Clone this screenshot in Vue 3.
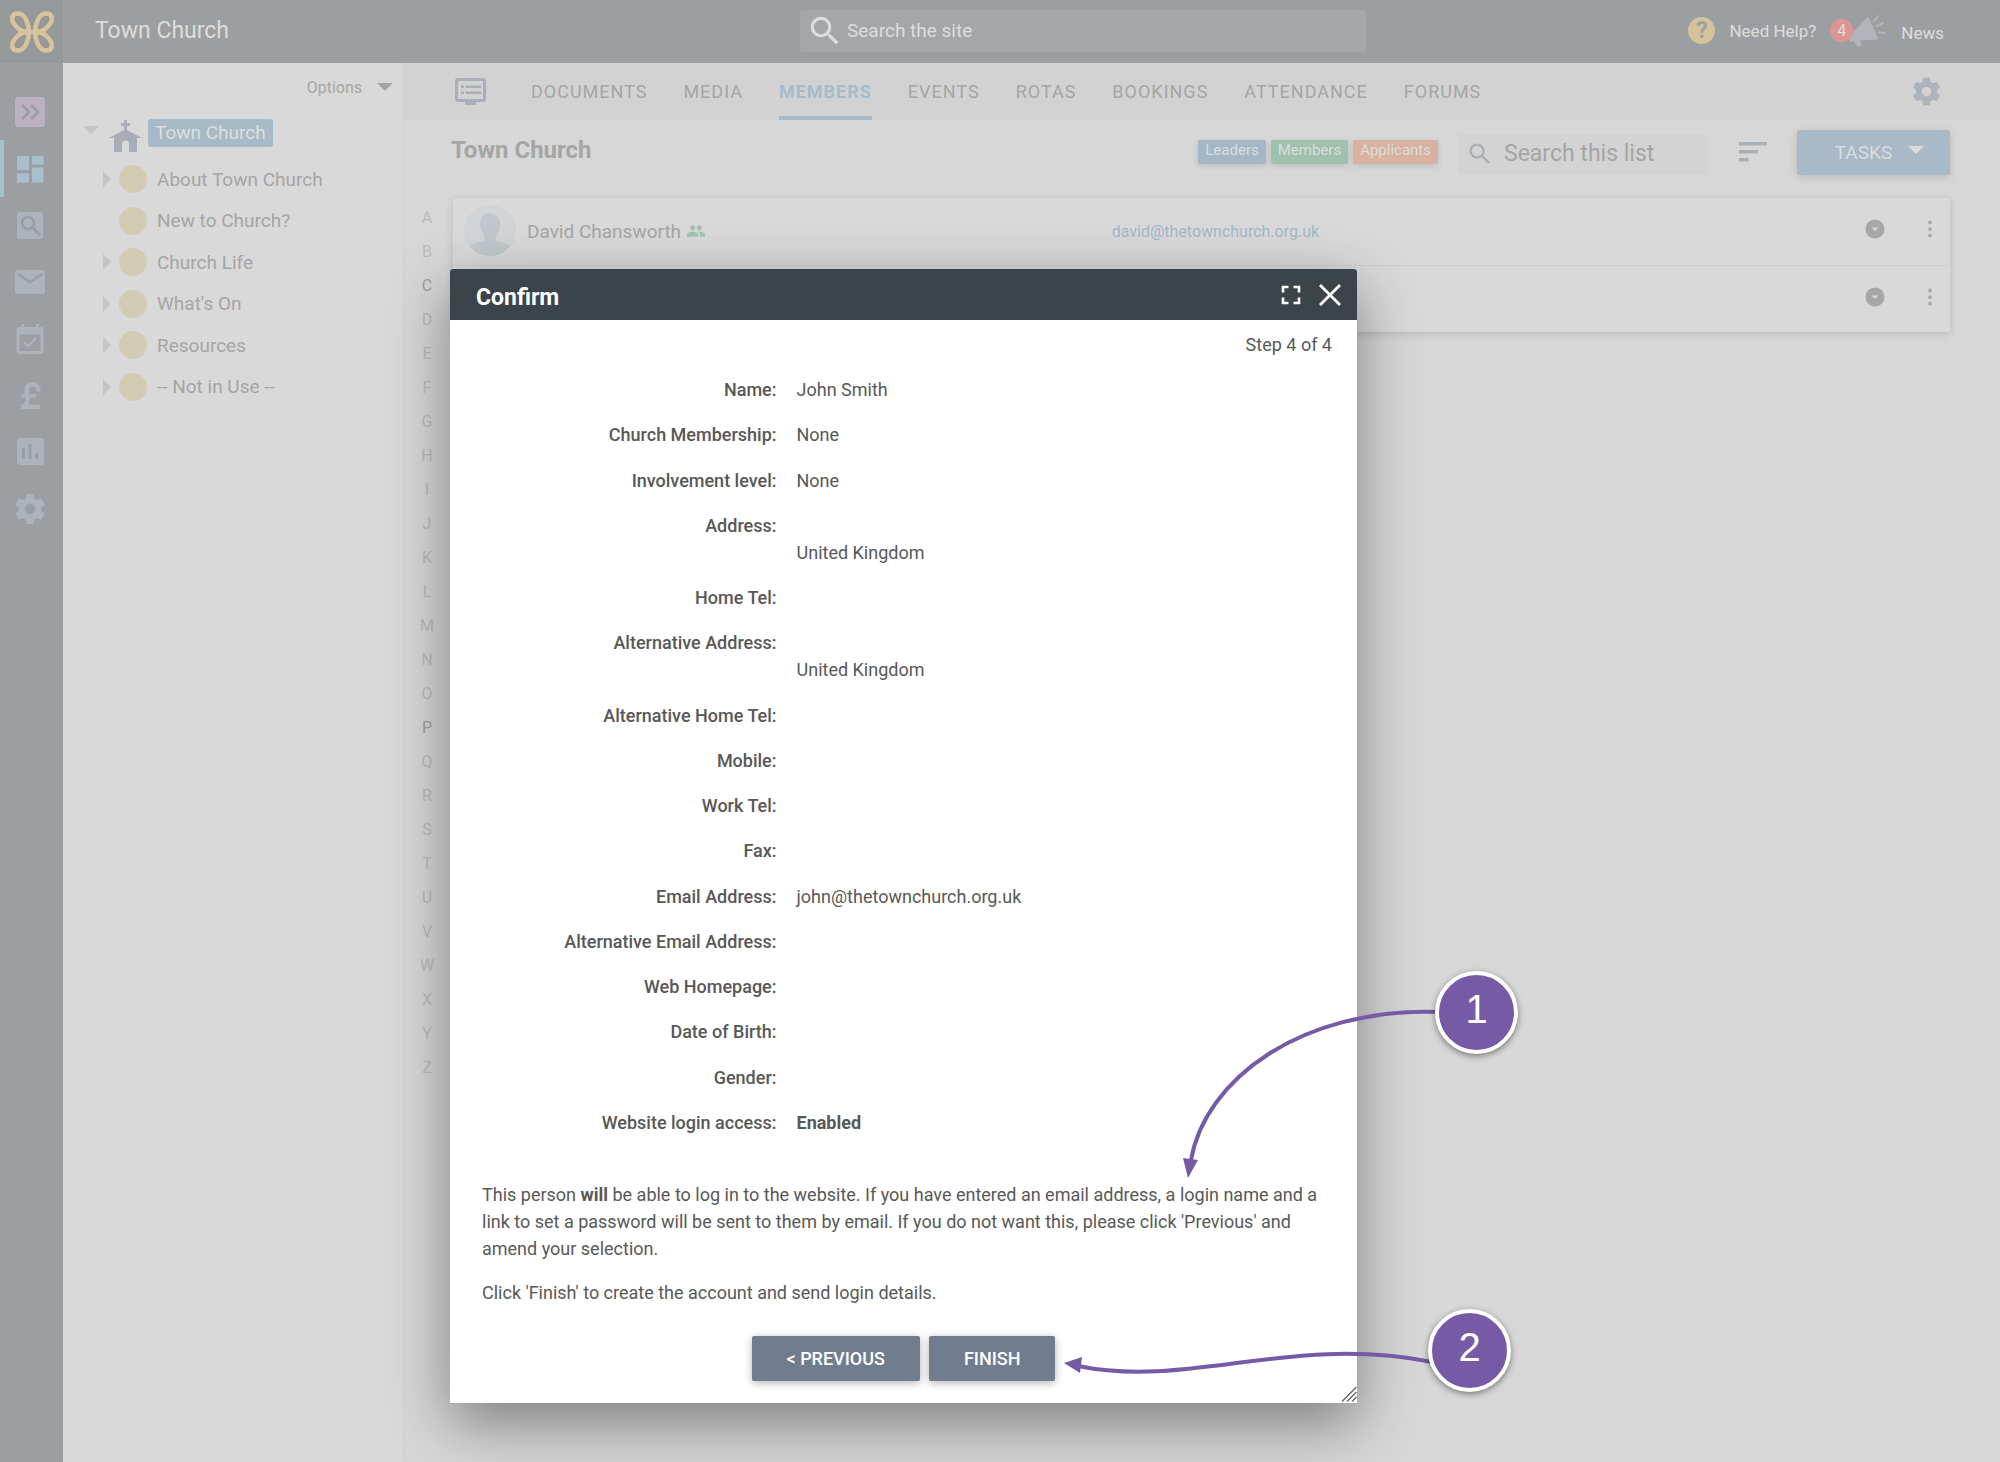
<script setup>
const railItems = [
  { name: 'expand', label: 'Expand menu' },
  { name: 'dashboard', label: 'Dashboard', active: true },
  { name: 'search', label: 'Search' },
  { name: 'mail', label: 'Mail' },
  { name: 'calendar', label: 'Calendar' },
  { name: 'pound', label: 'Finance' },
  { name: 'chart', label: 'Reports' },
  { name: 'gear', label: 'Settings' },
]

const pages = [
  { name: 'About Town Church', children: true },
  { name: 'New to Church?', children: false },
  { name: 'Church Life', children: true },
  { name: "What's On", children: true },
  { name: 'Resources', children: true },
  { name: '-- Not in Use --', children: true },
]

const tabs = ['Documents', 'Media', 'Members', 'Events', 'Rotas', 'Bookings', 'Attendance', 'Forums']
const activeTab = 'Members'

const letters = 'ABCDEFGHIJKLMNOPQRSTUVWXYZ'.split('')
const usedLetters = ['C', 'P']

const people = [
  { name: 'David Chansworth', email: 'david@thetownchurch.org.uk' },
  { name: '', email: '' },
]

const details = [
  { label: 'Name', value: 'John Smith' },
  { label: 'Church Membership', value: 'None' },
  { label: 'Involvement level', value: 'None' },
  { label: 'Address', value: 'United Kingdom', below: true },
  { label: 'Home Tel', value: '' },
  { label: 'Alternative Address', value: 'United Kingdom', below: true },
  { label: 'Alternative Home Tel', value: '' },
  { label: 'Mobile', value: '' },
  { label: 'Work Tel', value: '' },
  { label: 'Fax', value: '' },
  { label: 'Email Address', value: 'john@thetownchurch.org.uk' },
  { label: 'Alternative Email Address', value: '' },
  { label: 'Web Homepage', value: '' },
  { label: 'Date of Birth', value: '' },
  { label: 'Gender', value: '' },
  { label: 'Website login access', value: 'Enabled', strong: true },
]

const gearPath =
  'M19.43 12.98c.04-.32.07-.64.07-.98s-.03-.66-.07-.98l2.11-1.65c.19-.15.24-.42.12-.64l-2-3.46c-.12-.22-.39-.3-.61-.22l-2.49 1c-.52-.4-1.08-.73-1.69-.98l-.38-2.65C14.46 2.18 14.25 2 14 2h-4c-.25 0-.46.18-.49.42l-.38 2.65c-.61.25-1.17.59-1.69.98l-2.49-1c-.23-.09-.49 0-.61.22l-2 3.46c-.13.22-.07.49.12.64l2.11 1.65c-.04.32-.07.65-.07.98s.03.66.07.98l-2.11 1.65c-.19.15-.24.42-.12.64l2 3.46c.12.22.39.3.61.22l2.49-1c.52.4 1.08.73 1.69.98l.38 2.65c.03.24.24.42.49.42h4c.25 0 .46-.18.49-.42l.38-2.65c.61-.25 1.17-.59 1.69-.98l2.49 1c.23.09.49 0 .61-.22l2-3.46c.12-.22.07-.49-.12-.64l-2.11-1.65zM12 15.5c-1.93 0-3.5-1.57-3.5-3.5s1.57-3.5 3.5-3.5 3.5 1.57 3.5 3.5-1.57 3.5-3.5 3.5z'
const searchPath =
  'M15.5 14h-.79l-.28-.27C15.41 12.59 16 11.11 16 9.5 16 5.91 13.09 3 9.5 3S3 5.91 3 9.5 5.91 16 9.5 16c1.61 0 3.09-.59 4.23-1.57l.27.28v.79l5 4.99L20.49 19l-4.99-5zm-6 0C7.01 14 5 11.99 5 9.5S7.01 5 9.5 5 14 7.01 14 9.5 11.99 14 9.5 14z'
</script>

<template>
  <div class="page">
    <header class="topbar">
      <a class="logo" href="#" aria-label="Home">
        <svg width="44" height="42" viewBox="0 0 44 42" fill="none" stroke="#d8c49c" stroke-width="4.6" stroke-linejoin="round">
          <path d="M19 21C18 10 14 2.500 7.500 2.500 2 2.500 1 8 3.500 12 6.500 17.500 12 21 19 21Z" />
          <path d="M19 21C18 32 14 39.500 7.500 39.500 2 39.500 1 34 3.500 30 6.500 24.500 12 21 19 21Z" />
          <path d="M25 21C26 10 30 2.500 36.500 2.500 42 2.500 43 8 40.500 12 37.500 17.500 32 21 25 21Z" />
          <path d="M25 21C26 32 30 39.500 36.500 39.500 42 39.500 43 34 40.500 30 37.500 24.500 32 21 25 21Z" />
          <path d="M18 21h8" />
        </svg>
      </a>
      <span class="site-name">Town Church</span>
      <label class="site-search">
        <svg width="38" height="38" viewBox="0 0 24 24" fill="#dcdddd"><path :d="searchPath" /></svg>
        <input type="text" placeholder="Search the site" aria-label="Search the site" />
      </label>
      <nav class="top-links">
        <a href="#" class="help-link"><span class="help-mark">?</span>Need Help?</a>
        <a href="#" class="news-link">
          <span class="count">4</span>
          <svg class="megaphone" width="38" height="32" viewBox="0 0 38 32">
            <path d="M19 2 29 24 11 25 12 31 8 31 6 26 1 26 0 22Z" fill="#b1b5b9" stroke="#b1b5b9" stroke-width="1" stroke-linejoin="round" />
            <path d="M25 6 29 1M28 11 34 8M30 17.500 36 18" stroke="#b1b5b9" stroke-width="2" stroke-linecap="round" />
          </svg>
          <span class="news-text">News</span>
        </a>
      </nav>
    </header>

    <div class="body">
      <nav class="rail" aria-label="Main">
        <a v-for="item in railItems" :key="item.name" href="#" :class="{ active: item.active }" :aria-label="item.label">
          <svg width="30" height="30" viewBox="0 0 30 30" fill="#adb3ba">
            <template v-if="item.name === 'expand'">
              <rect width="30" height="30" rx="3" fill="#bcb1c3" />
              <path d="M7 8l7 7-7 7M16 8l7 7-7 7" fill="none" stroke="#9b9da1" stroke-width="2.600" />
            </template>
            <path v-else-if="item.name === 'dashboard'" fill="#a9bfcc" d="M2 2h12v14H2zM17 2h11.500v8.500H17zM2 19.500h12v9H2zM17 13.500h11.500v15H17z" />
            <template v-else-if="item.name === 'search'">
              <rect x="2" y="1" width="26" height="27" rx="3" />
              <path d="M18 17l7 7" stroke="#9b9fa2" stroke-width="3" />
              <circle cx="13" cy="12" r="6" fill="none" stroke="#9b9fa2" stroke-width="2.600" />
            </template>
            <template v-else-if="item.name === 'mail'">
              <rect y="3" width="30" height="24" rx="3" />
              <path d="M3 7l12 8 12-8" fill="none" stroke="#9b9fa2" stroke-width="2.600" />
            </template>
            <template v-else-if="item.name === 'calendar'">
              <path fill-rule="evenodd" d="M6 0h3v3h12V0h3v3h1.500a3 3 0 0 1 3 3v21a3 3 0 0 1-3 3h-21a3 3 0 0 1-3-3V6a3 3 0 0 1 3-3H6zM4.500 10.500V27h21V10.500z" />
              <path d="M9 18l4 4 8-8" fill="none" stroke="#adb3ba" stroke-width="2.400" />
            </template>
            <template v-else-if="item.name === 'pound'">
              <path d="M23.500 10.500C23.500 5 21 3.500 18 3.500c-5 0-7 3.500-6 8 1.400 6 1 10-2 13.300" fill="none" stroke="#adb3ba" stroke-width="4.500" />
              <path d="M6 13h15v3.500H6zM6 23.500h19V28H6z" />
            </template>
            <template v-else-if="item.name === 'chart'">
              <rect x="2" y="1" width="27" height="27" rx="3" />
              <path d="M7 11h3v11H7zM13.500 7h3v15h-3zM20 16h3v6h-3z" fill="#9b9fa2" />
            </template>
            <svg v-else x="-3" y="-3" width="36" height="36" viewBox="0 0 24 24"><path :d="gearPath" /></svg>
          </svg>
        </a>
      </nav>

      <aside class="tree">
        <button type="button" class="options">Options <span class="caret"></span></button>
        <div class="root">
          <span class="caret light"></span>
          <svg width="33" height="32" viewBox="0 0 33 32" fill="#a8adb8">
            <path d="M15 0h3v3h3v3h-3v4l15 8h-5v14h-8v-8a3.500 3.500 0 0 0-7 0v8H5V18H0l15-8V6h-3V3h3z" />
          </svg>
          <a href="#">Town Church</a>
        </div>
        <ul>
          <li v-for="page in pages" :key="page.name">
            <span class="arrow" :class="{ hidden: !page.children }"></span>
            <span class="dot"></span>
            <a href="#">{{ page.name }}</a>
          </li>
        </ul>
      </aside>

      <main>
        <nav class="tabs" aria-label="Sections">
          <svg class="board" width="31" height="27" viewBox="0 0 31 27" fill="#a9aeb8">
            <path fill-rule="evenodd" d="M3 0h25a3 3 0 0 1 3 3v18a3 3 0 0 1-3 3h-7v3H10v-3H3a3 3 0 0 1-3-3V3a3 3 0 0 1 3-3zM3 3v18h25V3zM6 7.500h3v2.500H6zM10.500 7.500H26v2.500H10.500zM6 13.500h3V16H6zM10.500 13.500H26V16H10.500z" />
          </svg>
          <a v-for="tab in tabs" :key="tab" href="#" :class="{ current: tab === activeTab }">{{ tab }}</a>
          <button type="button" class="plain settings" aria-label="Settings">
            <svg width="33" height="33" viewBox="0 0 24 24" fill="#adb3bb"><path :d="gearPath" /></svg>
          </button>
        </nav>

        <div class="toolbar">
          <h1>Town Church</h1>
          <a href="#" class="tag leaders">Leaders</a>
          <a href="#" class="tag members">Members</a>
          <a href="#" class="tag applicants">Applicants</a>
          <label class="list-search">
            <svg width="28" height="28" viewBox="0 0 24 24" fill="#a9afb8"><path :d="searchPath" /></svg>
            <input type="text" placeholder="Search this list" aria-label="Search this list" />
          </label>
          <button type="button" class="plain sort" aria-label="Sort">
            <svg width="28" height="20" viewBox="0 0 28 20" fill="#a9afb8"><path d="M0 0h28v3.500H0zM0 8h19v3.500H0zM0 16h9.500v3.500H0z" /></svg>
          </button>
          <button type="button" class="tasks">TASKS <span class="caret white"></span></button>
        </div>

        <div class="listing">
          <nav class="letters" aria-label="Letters">
            <a v-for="letter in letters" :key="letter" href="#" :class="{ used: usedLetters.includes(letter) }">{{ letter }}</a>
          </nav>
          <table class="people">
            <tbody>
              <tr v-for="(person, index) in people" :key="index">
                <td class="who">
                  <div v-if="person.name" class="person">
                    <svg width="52" height="52" viewBox="0 0 52 52">
                      <clipPath id="avatar"><circle cx="26" cy="26" r="25" /></clipPath>
                      <circle cx="26" cy="26" r="25" fill="#d2d5d7" stroke="#cdd1d4" />
                      <path clip-path="url(#avatar)" fill="#c1c7cb" d="M26 8c7 0 10 5 10 11 0 5-2 8-4 11-1 5 0 6 4 7 6 1 10 3 13 6v9H3v-9c3-3 7-5 13-6 4-1 5-2 4-7-2-3-4-6-4-11 0-6 3-11 10-11z" />
                    </svg>
                    <span>{{ person.name }}</span>
                    <svg width="18" height="12" viewBox="1 5 22 14" fill="#a0c2ae">
                      <path d="M16 11c1.660 0 2.990-1.340 2.990-3S17.660 5 16 5s-3 1.340-3 3 1.340 3 3 3zm-8 0c1.660 0 2.990-1.340 2.990-3S9.660 5 8 5 5 6.340 5 8s1.340 3 3 3zm0 2c-2.330 0-7 1.170-7 3.500V19h14v-2.500c0-2.330-4.670-3.500-7-3.500zm8 0c-.290 0-.620.020-.970.050 1.160.840 1.970 1.970 1.970 3.450V19h6v-2.500c0-2.330-4.670-3.500-7-3.500z" />
                    </svg>
                  </div>
                </td>
                <td><a v-if="person.email" href="#">{{ person.email }}</a></td>
                <td class="actions">
                  <div>
                    <button type="button" class="plain" aria-label="Show details">
                      <svg width="20" height="20" viewBox="0 0 20 20"><circle cx="10" cy="10" r="9.500" fill="#a7a7a7" /><path d="M6.500 8.500h7L10 12z" fill="#d8d8d8" /></svg>
                    </button>
                    <button type="button" class="plain" aria-label="More actions">
                      <svg width="6" height="18" viewBox="0 0 6 18" fill="#acacac"><circle cx="3" cy="2.500" r="2" /><circle cx="3" cy="9" r="2" /><circle cx="3" cy="15.500" r="2" /></svg>
                    </button>
                  </div>
                </td>
              </tr>
            </tbody>
          </table>
        </div>
      </main>
    </div>

    <div class="layer">
      <section class="dialog" role="dialog" aria-labelledby="dialog-title">
        <header>
          <h2 id="dialog-title">Confirm</h2>
          <button type="button" class="plain" aria-label="Full screen">
            <svg width="20" height="20" viewBox="0 0 20 20" fill="none" stroke="#fff" stroke-width="2.600"><path d="M7.500 2H2v5.500M12.500 2H18v5.500M7.500 18H2v-5.500M12.500 18H18v-5.500" /></svg>
          </button>
          <button type="button" class="plain" aria-label="Close">
            <svg width="22" height="22" viewBox="0 0 22 22" fill="none" stroke="#fff" stroke-width="2.800"><path d="M1 1l20 20M21 1L1 21" /></svg>
          </button>
        </header>
        <p class="step">Step 4 of 4</p>
        <dl>
          <div v-for="row in details" :key="row.label">
            <dt>{{ row.label }}:</dt>
            <dd :class="{ strong: row.strong, below: row.below }">{{ row.value }}</dd>
          </div>
        </dl>
        <div class="notes">
          <p>
            This person <b>will</b> be able to log in to the website. If you have entered an email address, a login name and a
            link to set a password will be sent to them by email. If you do not want this, please click 'Previous' and
            amend your selection.
          </p>
          <p>Click 'Finish' to create the account and send login details.</p>
        </div>
        <div class="buttons">
          <button type="button">&lt; PREVIOUS</button>
          <button type="button">FINISH</button>
        </div>
        <svg class="grip" width="16" height="16" viewBox="0 0 16 16" stroke="#666" stroke-width="1.400"><path d="M1 15.500 15.500 1M6 15.500 15.500 6M11 15.500 15.500 11" /></svg>

        <svg class="arrows" width="1080" height="1136" viewBox="0 0 1080 1136" fill="none" stroke="#765aa6" stroke-width="4">
          <path d="M987 743C850 739 755 811 741 891" />
          <path d="M733 889l15 2-10 18z" fill="#765aa6" stroke="none" />
          <path d="M982 1093C840 1065 740 1120 628 1097" />
          <path d="M614 1094l18-6-2 16z" fill="#765aa6" stroke="none" />
        </svg>
        <span class="callout one">1</span>
        <span class="callout two">2</span>
      </section>
    </div>
  </div>
</template>

<style>
body {
  margin: 0;
}
</style>

<style scoped>
.page {
  position: relative;
  display: flex;
  flex-direction: column;
  min-height: 100vh;
  overflow: hidden;
  background: #d7d7d7;
  color: #a5a5a5;
  font-family: Roboto, sans-serif;
  font-size: 18px;
}
.page *,
.page {
  box-sizing: border-box;
}
a {
  color: inherit;
  text-decoration: none;
}
button,
input {
  font: inherit;
  color: inherit;
}
button {
  border: 0;
  cursor: pointer;
}
svg {
  display: block;
  flex: none;
}
.plain {
  display: flex;
  padding: 0;
  background: none;
}
.caret {
  width: 0;
  border: 8px solid transparent;
  border-top-color: #a5a5a5;
  border-bottom: 0;
}
.caret.light {
  border-top-color: #c5c5c5;
}
.caret.white {
  margin-bottom: 4px;
  border-top-color: #dcdcdc;
}

/* Top bar */
.topbar {
  display: flex;
  align-items: center;
  height: 63px;
  padding-bottom: 2px;
  background: #9c9fa1;
  color: #dcdddd;
}
.logo {
  display: flex;
  align-items: center;
  justify-content: center;
  width: 63px;
  height: 63px;
  margin-bottom: -2px;
  background: #969999;
}
.site-name {
  width: 737px;
  padding-left: 32px;
  font-size: 23px;
}
.site-search {
  display: flex;
  align-items: center;
  width: 566px;
  height: 42px;
  padding-left: 6px;
  border-radius: 4px;
  background: #a4a7a9;
}
.site-search input {
  flex: 1;
  min-width: 0;
  padding: 0 3px;
  border: 0;
  background: none;
  font-size: 19px;
}
input::placeholder {
  color: inherit;
  opacity: 1;
}
.top-links {
  display: flex;
  flex: 1;
  align-items: center;
  justify-content: flex-end;
  gap: 14px;
  padding-right: 56px;
  font-size: 17px;
}
.help-link,
.news-link {
  display: flex;
  align-items: center;
}
.help-link {
  gap: 14px;
}
.help-mark {
  width: 27px;
  border-radius: 50%;
  background: #d5c29b;
  color: #9c9fa1;
  font-size: 23px;
  font-weight: 700;
  line-height: 27px;
  text-align: center;
}
.count {
  position: relative;
  z-index: 1;
  width: 23px;
  margin-right: -4px;
  border-radius: 50%;
  background: #dc9592;
  font-size: 16px;
  line-height: 23px;
  text-align: center;
}
.news-text {
  padding: 4px 0 0 14px;
}

.body {
  display: flex;
  flex: 1;
}

/* Icon rail */
.rail {
  display: flex;
  flex-direction: column;
  flex: none;
  width: 63px;
  padding-top: 21px;
  background: #9b9fa2;
}
.rail a {
  display: flex;
  align-items: center;
  height: 57px;
  padding-left: 15px;
}
.rail a:nth-child(3n + 1) {
  height: 56px;
}
.rail a.active {
  padding-left: 11px;
  border-left: 4px solid #a9bfcc;
}

/* Page tree */
.tree {
  display: flex;
  flex-direction: column;
  flex: none;
  width: 341px;
  padding: 12px 10px 0 16px;
  border-right: 1px solid #cfcfcf;
  background: #d9d9d9;
  font-size: 19px;
}
.options {
  display: flex;
  align-items: center;
  align-self: flex-end;
  gap: 15px;
  height: 24px;
  padding: 0;
  background: none;
  font-size: 16px;
}
.root {
  display: flex;
  align-items: center;
  height: 40px;
  margin-top: 14px;
}
.root .caret {
  margin: 0 10px 6px 4px;
}
.root svg {
  margin-top: 6px;
}
.root a {
  margin-left: 6px;
  padding: 0 7px;
  border-radius: 3px;
  background: #a7bac7;
  color: #dedede;
  line-height: 28px;
}
.tree ul {
  margin: 5px 0 0;
  padding: 0 0 0 24px;
  list-style: none;
}
.tree li {
  display: flex;
  align-items: center;
  height: 42px;
}
.tree li:nth-child(even) {
  height: 41px;
}
.arrow {
  margin-right: 8px;
  border: 8px solid transparent;
  border-left-color: #c5c5c5;
  border-right: 0;
}
.arrow.hidden {
  visibility: hidden;
}
.dot {
  width: 28px;
  height: 28px;
  margin-right: 10px;
  border-radius: 50%;
  background: #d3ccb5;
}

/* Main area */
main {
  flex: 1;
  min-width: 0;
}
.tabs {
  display: flex;
  gap: 36px;
  height: 57px;
  padding: 0 57px 0 51px;
  background: #d2d2d2;
  text-transform: uppercase;
  letter-spacing: 1px;
}
.tabs a {
  line-height: 58px;
}
.tabs a.current {
  height: 57px;
  border-bottom: 4px solid #a7bac7;
  color: #a4bccb;
  font-weight: 700;
}
.board {
  align-self: center;
  margin-right: 9px;
}
.settings {
  align-self: center;
  margin-left: auto;
}
.toolbar {
  display: flex;
  align-items: center;
  height: 78px;
  padding: 0 50px 14px 47px;
}
h1 {
  margin: 0 auto 4px 0;
  font-size: 24px;
  line-height: 28px;
}
.tag {
  margin-right: 5px;
  padding: 0 7px 3px;
  border-radius: 2px;
  box-shadow: 0 2px 6px rgb(0 0 0 / 12%);
  color: #dcdcdc;
  font-size: 15px;
  line-height: 21px;
}
.leaders {
  background: #a3b7c6;
}
.members {
  background: #9fc1ad;
}
.applicants {
  background: #d8b2a0;
}
.list-search {
  display: flex;
  align-items: center;
  width: 250px;
  height: 40px;
  margin: 3px 31px 0 15px;
  padding-left: 8px;
  background: #d3d3d3;
  font-size: 23px;
}
.list-search input {
  flex: 1;
  min-width: 0;
  padding: 0 10px;
  border: 0;
  background: none;
}
.tasks {
  display: flex;
  align-items: center;
  justify-content: center;
  gap: 16px;
  width: 153px;
  height: 45px;
  margin-left: 30px;
  padding: 0 0 0 12px;
  border-radius: 3px;
  background: #a8bac7;
  box-shadow: 0 2px 8px rgb(0 0 0 / 15%);
  color: #dcdcdc;
  font-size: 19px;
}
.listing {
  display: flex;
  align-items: flex-start;
  padding-right: 50px;
}
.letters {
  display: flex;
  flex-direction: column;
  width: 47px;
  padding: 3px 1px 0 0;
  color: #bbb;
  font-size: 16px;
  line-height: 34px;
  text-align: center;
}
.used {
  color: #a0a0a0;
}
.people {
  flex: 1;
  margin-left: 2px;
  border-collapse: collapse;
  background: #d9d9d9;
  box-shadow: 0 2px 8px rgb(0 0 0 / 14%);
}
.people td {
  height: 67px;
  padding: 0;
  font-size: 16px;
}
.people tr + tr td {
  border-top: 1px solid #cfcfcf;
}
.people td a {
  color: #a4b8c6;
}
.people .who {
  width: 44%;
  font-size: 19px;
}
.person {
  display: flex;
  align-items: center;
  padding-left: 11px;
}
.person span {
  margin: 0 6px 0 11px;
}
.actions div {
  display: flex;
  align-items: center;
  justify-content: flex-end;
  gap: 42px;
  padding: 0 17px 4px 0;
}

/* Confirmation dialog */
.layer {
  position: absolute;
  inset: 0;
  padding: 269px 40px 0 450px;
}
.dialog {
  position: relative;
  max-width: 907px;
  border-radius: 3px 3px 0 0;
  background: #fff;
  box-shadow: 0 20px 60px rgb(0 0 0 / 42%);
  color: #585858;
  line-height: 27px;
}
.dialog > header {
  display: flex;
  align-items: center;
  gap: 18px;
  height: 51px;
  padding: 0 16px 0 26px;
  border-radius: 3px 3px 0 0;
  background: #3b444a;
  color: #fff;
}
h2 {
  flex: 1;
  margin: 6px 0 0;
  font-size: 23px;
}
.step {
  margin: 0;
  padding: 11px 25px 0;
  text-align: right;
}
.dialog dl {
  display: flex;
  flex-direction: column;
  justify-content: space-between;
  min-height: 760px;
  margin: 18px 0 0;
}
.dialog dl div {
  display: flex;
}
dt {
  width: 36%;
  font-weight: 500;
  text-align: right;
}
dd {
  margin-left: 20px;
}
dd.below {
  padding-top: 27px;
}
dd.strong {
  font-weight: 700;
}
.notes {
  padding: 45px 30px 0 32px;
}
.notes p {
  margin: 0 0 17px;
}
.buttons {
  display: flex;
  justify-content: center;
  gap: 9px;
  padding: 13px 0 22px;
}
.buttons button {
  height: 45px;
  padding: 0 35px;
  border-radius: 2px;
  background: #707d8f;
  box-shadow: 0 2px 8px rgb(0 0 0 / 30%);
  color: #fff;
  font-weight: 500;
}
.grip {
  position: absolute;
  right: 0;
  bottom: 1px;
}

/* Numbered callouts drawn over the dialog */
.arrows {
  position: absolute;
  top: 0;
  left: 0;
  pointer-events: none;
}
.callout {
  position: absolute;
  width: 83px;
  height: 83px;
  border: 4px solid #fff;
  border-radius: 50%;
  background: #765aa6;
  box-shadow: 0 2px 6px rgb(0 0 0 / 45%);
  color: #fff;
  font-family: "Liberation Sans", Arial, sans-serif;
  font-size: 40px;
  line-height: 68px;
  text-align: center;
}
.one {
  top: 702px;
  left: 985px;
}
.two {
  top: 1040px;
  left: 978px;
}
</style>
